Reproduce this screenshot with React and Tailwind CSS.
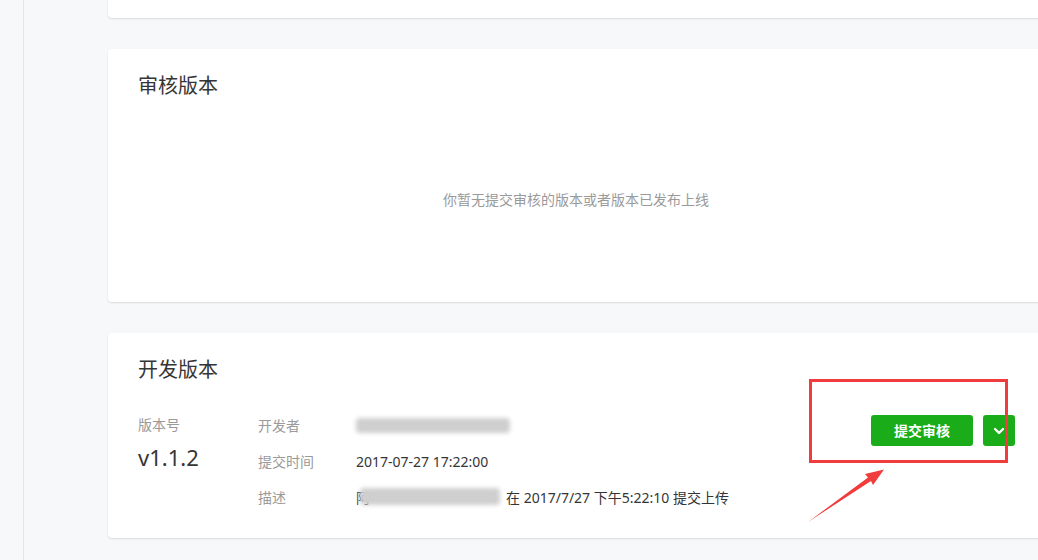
import React from 'react';

const font = { fontFamily: '"Noto Sans", "Noto Sans CJK SC", sans-serif' };

const Blur = ({ className }) => (
  <div className={`bg-[#cfcfcf] blur-[2px] rounded-sm ${className}`} />
);

const InfoRow = ({ label, children }) => (
  <div className="flex items-center h-[36px]">
    <div className="w-[98px] text-[14px] text-[#9a9a9a]">{label}</div>
    <div className="text-[14px] text-[#353535] flex items-center">{children}</div>
  </div>
);

export default function App() {
  return (
    <div style={font} className="w-[1038px] h-[560px] overflow-hidden bg-[#f7f8fa] flex">
      <div className="w-[24px] shrink-0 border-r border-[#e4e6ea] bg-[#f7f8fa]" />
      <div className="pl-[84px] flex flex-col gap-[31px] relative">
        <div className="w-[936px] h-[18px] bg-white rounded-b shadow-[0_1px_2px_rgba(0,0,0,0.12)]" />

        <div className="w-[936px] h-[253px] bg-white rounded shadow-[0_1px_2px_rgba(0,0,0,0.12)] px-[30px] pt-[24px] flex flex-col">
          <h2 className="text-[20px] leading-[26px] text-[#353535]">审核版本</h2>
          <p className="mt-[90px] text-center text-[14px] text-[#9a9a9a]">你暂无提交审核的版本或者版本已发布上线</p>
        </div>

        <div className="w-[936px] h-[205px] bg-white rounded shadow-[0_1px_2px_rgba(0,0,0,0.12)] px-[30px] pt-[24px] flex flex-col">
          <h2 className="text-[20px] leading-[26px] text-[#353535]">开发版本</h2>
          <div className="mt-[24px] flex">
            <div className="w-[120px] pt-[8px]">
              <div className="text-[14px] text-[#9a9a9a] leading-[20px]">版本号</div>
              <div className="text-[22px] leading-[28px] text-[#353535] mt-[8px]">v1.1.2</div>
            </div>
            <div className="flex flex-col">
              <InfoRow label="开发者">
                <Blur className="w-[154px] h-[15px]" />
              </InfoRow>
              <InfoRow label="提交时间">2017-07-27 17:22:00</InfoRow>
              <InfoRow label="描述">
                <span className="relative">
                  阿
                  <Blur className="absolute left-[4px] top-[1px] w-[140px] h-[17px]" />
                </span>
                <span className="ml-[136px]">在 2017/7/27 下午5:22:10 提交上传</span>
              </InfoRow>
            </div>
            <div className="ml-auto mr-[-1px] pt-[8px] flex gap-[10px]">
              <button className="w-[102px] h-[31px] rounded-[3px] bg-[#1aad19] text-white text-[14px] font-bold">提交审核</button>
              <button className="w-[32px] h-[31px] rounded-[3px] bg-[#1aad19] text-white flex items-center justify-center">
                <svg width="14" height="14" viewBox="0 0 14 14" fill="none" stroke="white" strokeWidth="2.4" strokeLinecap="round" strokeLinejoin="round">
                  <path d="M3 5 L7 9 L11 5" />
                </svg>
              </button>
            </div>
          </div>
        </div>

        <div className="absolute left-[785px] top-[379px] w-[199px] h-[84px] border-[3px] border-[#f03c3c]" />
        <svg className="absolute left-[776px] top-[460px]" width="100" height="70" viewBox="0 0 100 70">
          <path d="M8 62 L68 17.5 L65 14 L84 9.5 L73 25 L71 21 Z" fill="#f03c3c" />
        </svg>
      </div>
    </div>
  );
}
